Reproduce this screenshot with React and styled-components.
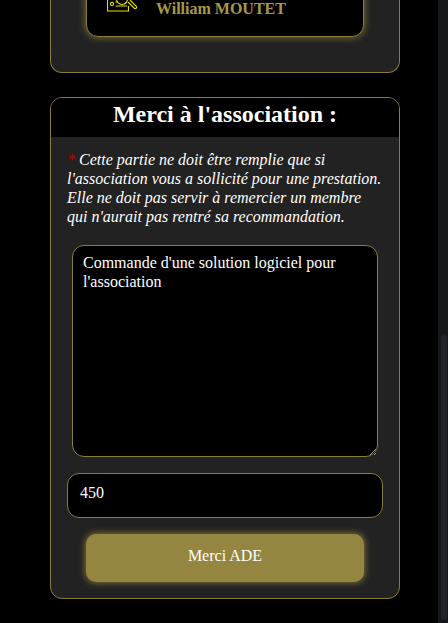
import React from "react";
import styled, { createGlobalStyle } from "styled-components";

const GlobalStyle = createGlobalStyle`
  html, body {
    margin: 0;
    height: 623px;
    overflow: hidden;
    background: #000;
  }
`;

const Page = styled.div`
  width: 350px;
  margin-left: 50px;
  display: flex;
  flex-direction: column;
  gap: 24px;
  font-family: "Liberation Serif", "Times New Roman", serif;
  color: #fff;
`;

const Card = styled.section`
  background: #222;
  border: 1px solid #8a7d3c;
  border-radius: 12px;
  overflow: hidden;
`;

const TopCard = styled(Card)`
  height: 73px;
  box-sizing: border-box;
  border-top: none;
  border-top-left-radius: 0;
  border-top-right-radius: 0;
  padding: 0 35px 35px;
  display: flex;
  flex-direction: column;
  justify-content: flex-end;
`;

const MemberBox = styled.div`
  height: 50px;
  flex: none;
  box-sizing: border-box;
  background: #000;
  border: 1px solid #8a7d3c;
  border-radius: 12px;
  box-shadow: 0 0 7px 1px rgba(148, 134, 64, 0.7);
  padding: 0 20px 18px;
  display: flex;
  align-items: flex-end;
  gap: 17px;
`;

const MemberIcon = styled.svg`
  width: 32px;
  height: 32px;
  flex: none;
  margin-bottom: -5px;
`;

const MemberName = styled.span`
  font-size: 16px;
  font-weight: bold;
  line-height: 18px;
  color: #a89a45;
`;

const CardTitle = styled.h2`
  margin: 0;
  height: 39px;
  background: #000;
  font-size: 24px;
  font-weight: bold;
  line-height: 33px;
  text-align: center;
`;

const CardBody = styled.div`
  padding: 13px 16px 16px;
  display: flex;
  flex-direction: column;
`;

const Notice = styled.p`
  margin: 0 0 19px;
  font-size: 16px;
  font-style: italic;
  line-height: 19px;
  color: #fff;
`;

const Star = styled.span`
  color: #c00000;
`;

const Message = styled.textarea`
  display: block;
  align-self: center;
  box-sizing: border-box;
  width: 306px;
  height: 212px;
  padding: 7px 10px;
  background: #000;
  color: #fff;
  border: 1px solid #8a7d3c;
  border-radius: 12px;
  outline: none;
  font-family: inherit;
  font-size: 16px;
  line-height: 19px;
`;

const Amount = styled.input`
  display: block;
  box-sizing: border-box;
  width: 316px;
  height: 45px;
  margin-top: 16px;
  padding: 0 12px 6px;
  background: #000;
  color: #fff;
  border: 1px solid #8a7d3c;
  border-radius: 12px;
  outline: none;
  font-family: inherit;
  font-size: 16px;
`;

const SubmitButton = styled.button`
  align-self: center;
  width: 278px;
  height: 48px;
  margin-top: 16px;
  padding: 0 6px 5px;
  background: #948640;
  color: #fff;
  border: none;
  border-radius: 10px;
  box-shadow: 0 0 6px 1px rgba(148, 134, 64, 0.8);
  font-family: inherit;
  font-size: 16px;
`;

const ScrollTrack = styled.div`
  position: fixed;
  top: 0;
  right: 0;
  bottom: 0;
  width: 10px;
  background: #17181a;
`;

const ScrollThumb = styled.div`
  position: absolute;
  top: 335px;
  bottom: 3px;
  left: 3px;
  right: 1px;
  border-radius: 3px;
  background: #232427;
`;

export default function App() {
  return (
    <>
      <GlobalStyle />
      <Page>
        <TopCard>
          <MemberBox>
            <MemberIcon viewBox="0 0 32 32" fill="none" stroke="#e6e000" strokeWidth="1.1">
              <path d="M0.5 6v14h21v-5M0.5 6h8" />
              <circle cx="5" cy="13" r="1.6" />
              <path d="M8.5 15H20M8.5 11h2" />
              <circle cx="15" cy="8" r="5.5" />
              <path d="M19.5 11.5c-1 .5-1.5 1-2 1.5" />
              <path d="M21 11l6.5 6.5a1.5 1.5 0 0 0 2-2L23 9" />
            </MemberIcon>
            <MemberName>William MOUTET</MemberName>
          </MemberBox>
        </TopCard>
        <Card>
          <CardTitle>Merci à l'association :</CardTitle>
          <CardBody>
            <Notice>
              <Star>*</Star> Cette partie ne doit être remplie que si l'association vous a sollicité pour une
              prestation. Elle ne doit pas servir à remercier un membre qui n'aurait pas rentré sa recommandation.
            </Notice>
            <Message defaultValue="Commande d'une solution logiciel pour l'association" />
            <Amount type="text" defaultValue="450" />
            <SubmitButton type="button">Merci ADE</SubmitButton>
          </CardBody>
        </Card>
      </Page>
      <ScrollTrack>
        <ScrollThumb />
      </ScrollTrack>
    </>
  );
}
